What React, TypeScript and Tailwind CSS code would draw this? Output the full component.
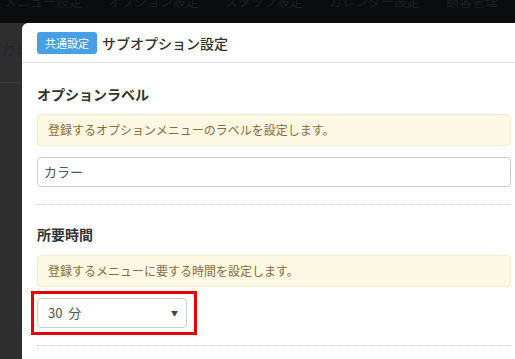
const font = { fontFamily: '"Noto Sans CJK JP", "Noto Sans", sans-serif' };

const HelpBox = ({ text }: { text: string }) => (
  <div className="rounded-[4px] border border-[#faebcc] bg-[#fcf8e3] px-[10px] py-[6px] text-[12px] leading-[18px] text-[#8a6d3b]">
    {text}
  </div>
);

const App = () => {
  return (
    <div
      className="relative h-[359px] w-[515px] overflow-hidden bg-[#2e2e2e]"
      style={font}
    >
      {/* page behind the overlay */}
      <div className="h-[23px] overflow-hidden bg-[#0b0c0e]">
        <div className="-mt-[9px] flex gap-[26px] whitespace-nowrap pl-[4px] text-[13px] text-[#1c1e22]">
          <span>メニュー設定</span>
          <span>オプション設定</span>
          <span>スタッフ設定</span>
          <span>カレンダー設定</span>
          <span>顧客管理</span>
          <span>総合設定</span>
        </div>
      </div>
      <div className="pt-[16px] text-[15px] leading-[20px] whitespace-nowrap text-[#1d2835]">
        カレンダー
      </div>
      <div className="mt-[23px] h-px w-[22px] bg-[#3a3a3a]" />

      {/* modal */}
      <div className="absolute left-[22px] top-[23px] h-[360px] w-[504px] rounded-tl-[6px] bg-white">
        <div className="flex items-center gap-[5px] border-b border-[#e5e5e5] px-[15px] pt-[9px] pb-[8px]">
          <span className="rounded-[3px] bg-[#47a0e6] px-[8px] text-[11px] leading-[22px] text-white">
            共通設定
          </span>
          <span className="text-[14px] font-medium leading-[22px] text-[#333]">
            サブオプション設定
          </span>
        </div>

        <div className="px-[15px] pt-[21px]">
          <div className="text-[14px] font-bold leading-[20px] text-[#333]">
            オプションラベル
          </div>
          <div className="mt-[10px]">
            <HelpBox text="登録するオプションメニューのラベルを設定します。" />
          </div>
          <div className="mt-[11px] flex h-[30px] items-center rounded-[4px] border border-[#ccc] px-[6px] text-[13px] text-[#555]">
            カラー
          </div>
          <div className="mt-[17px] border-t border-dotted border-[#ccc]" />

          <div className="mt-[19px] text-[14px] font-bold leading-[20px] text-[#333]">
            所要時間
          </div>
          <div className="mt-[11px]">
            <HelpBox text="登録するメニューに要する時間を設定します。" />
          </div>
          <div className="relative mt-[11px] w-[150px]">
            <div className="flex h-[30px] items-center justify-between rounded-[4px] border border-[#ccc] pl-[10px] pr-[8px] text-[13px] text-[#555]">
              <span>30&nbsp;&nbsp;分</span>
              <span className="text-[7px] text-[#444]">▼</span>
            </div>
            <div className="absolute -left-[6px] -top-[7px] h-[44px] w-[166px] border-[3px] border-[#e60000]" />
          </div>
          <div className="mt-[17px] border-t border-dotted border-[#ccc]" />
        </div>
      </div>
    </div>
  );
};

export default App;
